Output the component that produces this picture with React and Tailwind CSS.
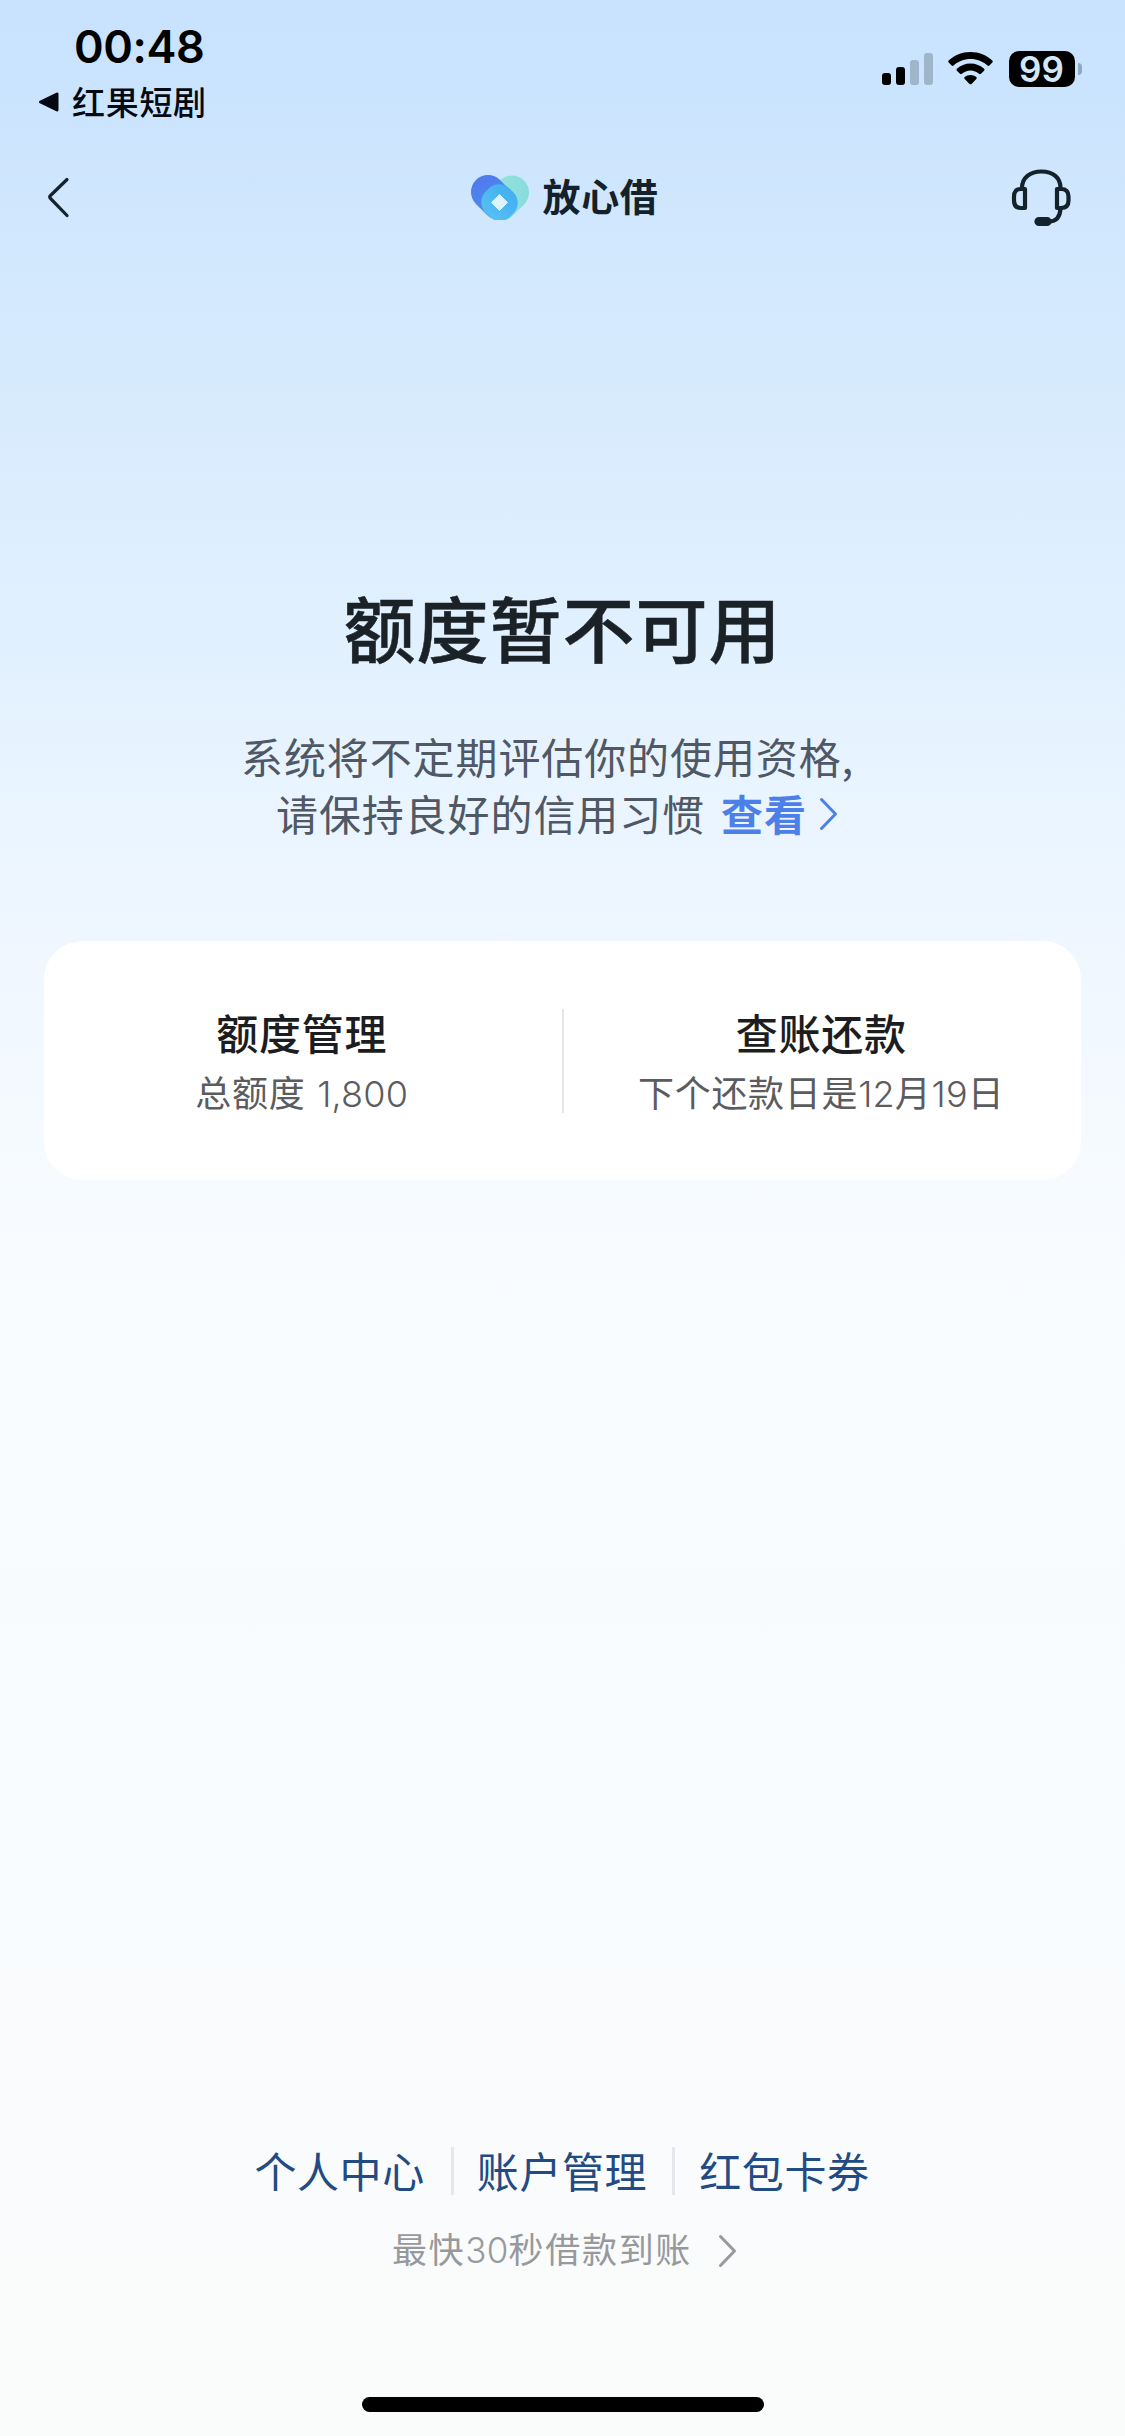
const cjk = "font-['Noto_Sans_CJK_SC',sans-serif]";

function StatusBar() {
  return (
    <header className="flex h-[132px] justify-between">
      <div className="pl-[38px] pt-[24px]">
        <div className="pl-[36px] font-['Inter',sans-serif] text-[45px] font-semibold leading-[46px] tracking-[-0.4px] text-black">
          00:48
        </div>
        <div className="mt-[9px] flex h-[46px] items-center text-[#050a12]">
          <svg width="22" height="22" viewBox="0 0 22 22">
            <path d="M2.500 11 L19 3 V19 Z" fill="currentColor" stroke="currentColor" strokeWidth="3" strokeLinejoin="round" />
          </svg>
          <span className="-mt-[3px] ml-[12px] text-[33px] font-medium leading-[46px] tracking-[0.700px]">红果短剧</span>
        </div>
      </div>
      <div className="flex items-start pr-[43px] pt-[51px]">
        <div className="mt-[2px] flex h-[32px] items-end gap-[5px]">
          <i className="h-[12px] w-[9px] rounded-[3px] bg-black" />
          <i className="h-[18px] w-[9px] rounded-[3px] bg-black" />
          <i className="h-[25px] w-[9px] rounded-[3px] bg-[#9fb5ca]" />
          <i className="h-[32px] w-[9px] rounded-[3px] bg-[#9fb5ca]" />
        </div>
        <svg className="ml-[15px] mt-px" width="45" height="33" viewBox="0 0 45 33" fill="#000">
          <path d="M22.5 0 C31 0 38.8 3.2 44.3 8.6 Q45.2 9.6 44.3 10.6 L41.4 13.5 Q40.5 14.3 39.5 13.5 C35 9.3 29 6.9 22.5 6.9 C16 6.9 10 9.3 5.500 13.500 Q4.500 14.300 3.600 13.500 L0.700 10.600 Q-0.200 9.600 0.700 8.600 C6.200 3.200 14 0 22.500 0 Z" />
          <path d="M22.5 11.500 C27.800 11.500 32.500 13.500 36.100 16.800 Q37 17.800 36.100 18.800 L33 21.800 Q32.100 22.600 31.100 21.800 C28.800 19.700 25.800 18.400 22.500 18.400 C19.200 18.400 16.200 19.700 13.900 21.800 Q12.900 22.600 12 21.800 L8.900 18.800 Q8 17.800 8.900 16.800 C12.500 13.500 17.200 11.500 22.500 11.500 Z" />
          <path d="M22.500 23 C24.800 23 26.800 23.800 28.300 25 Q29.300 26 28.300 27 L23.500 31.900 Q22.500 32.800 21.500 31.900 L16.700 27 Q15.700 26 16.700 25 C18.200 23.800 20.200 23 22.500 23 Z" />
        </svg>
        <div className="ml-[16px] flex h-[36px] w-[66px] items-center justify-center rounded-[10px] bg-black pr-px font-['Inter',sans-serif] text-[35px] font-semibold leading-[36px] text-[#d3e7fb]">
          99
        </div>
        <i className="ml-[3px] mt-[12px] h-[12px] w-[4px] rounded-r-[4px] bg-[#8fa9c0]" />
      </div>
    </header>
  );
}

function NavBar() {
  return (
    <nav className="flex h-[132px] items-center justify-between pl-[44px] pr-[52px]">
      <svg width="63" height="44" viewBox="0 0 63 44" fill="none">
        <path d="M23 3.500 L6.500 19.500 Q5 21 6.500 22.500 L23 39.500" stroke="#14232e" strokeWidth="3.200" strokeLinecap="round" strokeLinejoin="round" />
      </svg>
      <div className="flex items-center pl-[13px]">
        <svg className="-mt-[2px]" width="60" height="46" viewBox="0 0 60 46">
          <defs>
            <linearGradient id="petalBlue" x1="0" y1="0.300" x2="1" y2="0.500">
              <stop offset="0" stopColor="#5079ec" />
              <stop offset="1" stopColor="#4a93f0" />
            </linearGradient>
            <linearGradient id="petalMint" x1="0" y1="0" x2="1" y2="1">
              <stop offset="0" stopColor="#86dbe0" />
              <stop offset="1" stopColor="#97e5d6" />
            </linearGradient>
            <linearGradient id="petalCore" x1="0" y1="0" x2="0" y2="1">
              <stop offset="0" stopColor="#45aef0" />
              <stop offset="1" stopColor="#55c0f4" />
            </linearGradient>
          </defs>
          <rect x="-17" y="-17" width="50" height="34" rx="17" transform="translate(42 18.500) rotate(135)" fill="url(#petalMint)" />
          <rect x="-17" y="-17" width="50" height="34" rx="17" transform="translate(18 18) rotate(45)" fill="url(#petalBlue)" />
          <rect x="12" y="11.500" width="35" height="34" rx="15" transform="rotate(45 29.500 28.500)" fill="url(#petalCore)" />
          <path d="M29.500 20.500 L37.500 28.500 L29.500 36.500 L21.500 28.500 Z" fill="#dff2fd" stroke="#dff2fd" strokeLinejoin="round" />
        </svg>
        <span className="-mt-[6px] ml-[12px] text-[38px] font-bold leading-[46px] tracking-[0.700px] text-[#15212a]">放心借</span>
      </div>
      <svg width="64" height="64" viewBox="0 0 64 64" fill="none" stroke="#14222c" strokeWidth="4.200">
        <path d="M13 22 C13 11.500 21 5.500 32.500 5.500 C44 5.500 51.500 11.500 51.500 22" />
        <path d="M16 23 H12 Q5 23 5 30.500 V34.500 Q5 42 12 42 H16 Z" strokeLinejoin="round" />
        <path d="M48 23 H52 Q59.500 23 59.500 30.500 V34.500 Q59.500 42 52 42 H48 Z" strokeLinejoin="round" />
        <path d="M51.500 42 Q51 55.500 40 55.500" />
        <rect x="27.500" y="53" width="13" height="5" rx="2.500" fill="#14222c" />
      </svg>
    </nav>
  );
}

function Chevron({ className }) {
  return (
    <svg className={className} width="20" height="34" viewBox="0 0 20 34" fill="none">
      <path d="M2.500 2.500 L16.500 17 L2.500 31.500" stroke="currentColor" strokeWidth="3" strokeLinecap="round" strokeLinejoin="round" />
    </svg>
  );
}

function Notice() {
  return (
    <section className="flex flex-col items-center pt-[302px]">
      <h1 className="h-[120px] text-[72px] font-medium leading-[120px] tracking-[1px] text-[#1a2127] [-webkit-text-stroke:0.5px_#1a2127]">额度暂不可用</h1>
      <div className="mt-[41px] pl-[38px] text-[42px] leading-[57px] tracking-[0.900px] text-[#4f5864]">
        <p className="-ml-[35px] w-[646px] whitespace-nowrap">系统将不定期评估你的使用资格,</p>
        <p className="flex items-center whitespace-nowrap">
          <span>请保持良好的信用习惯</span>
          <a className="ml-[16px] flex items-center font-bold text-[#4d7fe8]">
            查看
            <Chevron className="mt-[2px] ml-[12px]" />
          </a>
        </p>
      </div>
    </section>
  );
}

function Tile({ title, detail }) {
  return (
    <div className="-mt-[7px] flex flex-1 flex-col items-center pr-[2px]">
      <div className="text-[42px] font-medium leading-[60px] tracking-[0.700px] text-[#1c1d20]">{title}</div>
      <div className="text-[36px] leading-[58px] tracking-[0.700px] text-[#5b5c60]">{detail}</div>
    </div>
  );
}

function Num({ children }) {
  return <span className="font-['Inter',sans-serif] font-[350] tracking-[0.200px]">{children}</span>;
}

export default function App() {
  return (
    <div className={"flex h-[2436px] w-[1125px] flex-col overflow-hidden bg-[linear-gradient(180deg,#c8e2ff_0px,#d0e7fd_220px,#dfeffe_580px,#e8f4ff_780px,#f0f7ff_960px,#f7fbff_1200px,#f9fbfd_2000px,#fafbfb_2436px)] " + cjk}>
      <StatusBar />
      <NavBar />
      <Notice />
      <section className="mx-[44px] mt-[100px] flex h-[239px] items-start rounded-[38px] bg-white pt-[68px]">
        <Tile title="额度管理" detail={<>总额度<span className="ml-[3px]"> </span><Num>1,800</Num></>} />
        <i className="h-[104px] w-[2px] bg-[#e6e6e8]" />
        <Tile title="查账还款" detail={<>下个还款日是<Num>12</Num>月<Num>19</Num>日</>} />
      </section>
      <footer className="mt-auto flex h-[294px] flex-col items-center">
        <div className="flex h-[58px] items-center pr-px text-[42px] leading-[58px] tracking-[0.600px] text-[#214b82]">
          <a className="-mt-[2px]">个人中心</a>
          <i className="ml-[26px] mr-[23px] h-[48px] w-[3px] bg-[#e4e7ec]" />
          <a className="-mt-[2px]">账户管理</a>
          <i className="ml-[25px] mr-[24px] h-[48px] w-[3px] bg-[#e4e7ec]" />
          <a className="-mt-[2px]">红包卡券</a>
        </div>
        <a className="mt-[25px] flex h-[48px] items-center pl-[5px] text-[35px] leading-[48px] tracking-[1.700px] text-[#97999c]">
          <span>最快<Num>30</Num>秒借款到账</span>
          <Chevron className="ml-[26px] mt-[3px]" />
        </a>
        <div className="mb-[24px] mt-auto h-[15px] w-[402px] rounded-full bg-black" />
      </footer>
    </div>
  );
}
